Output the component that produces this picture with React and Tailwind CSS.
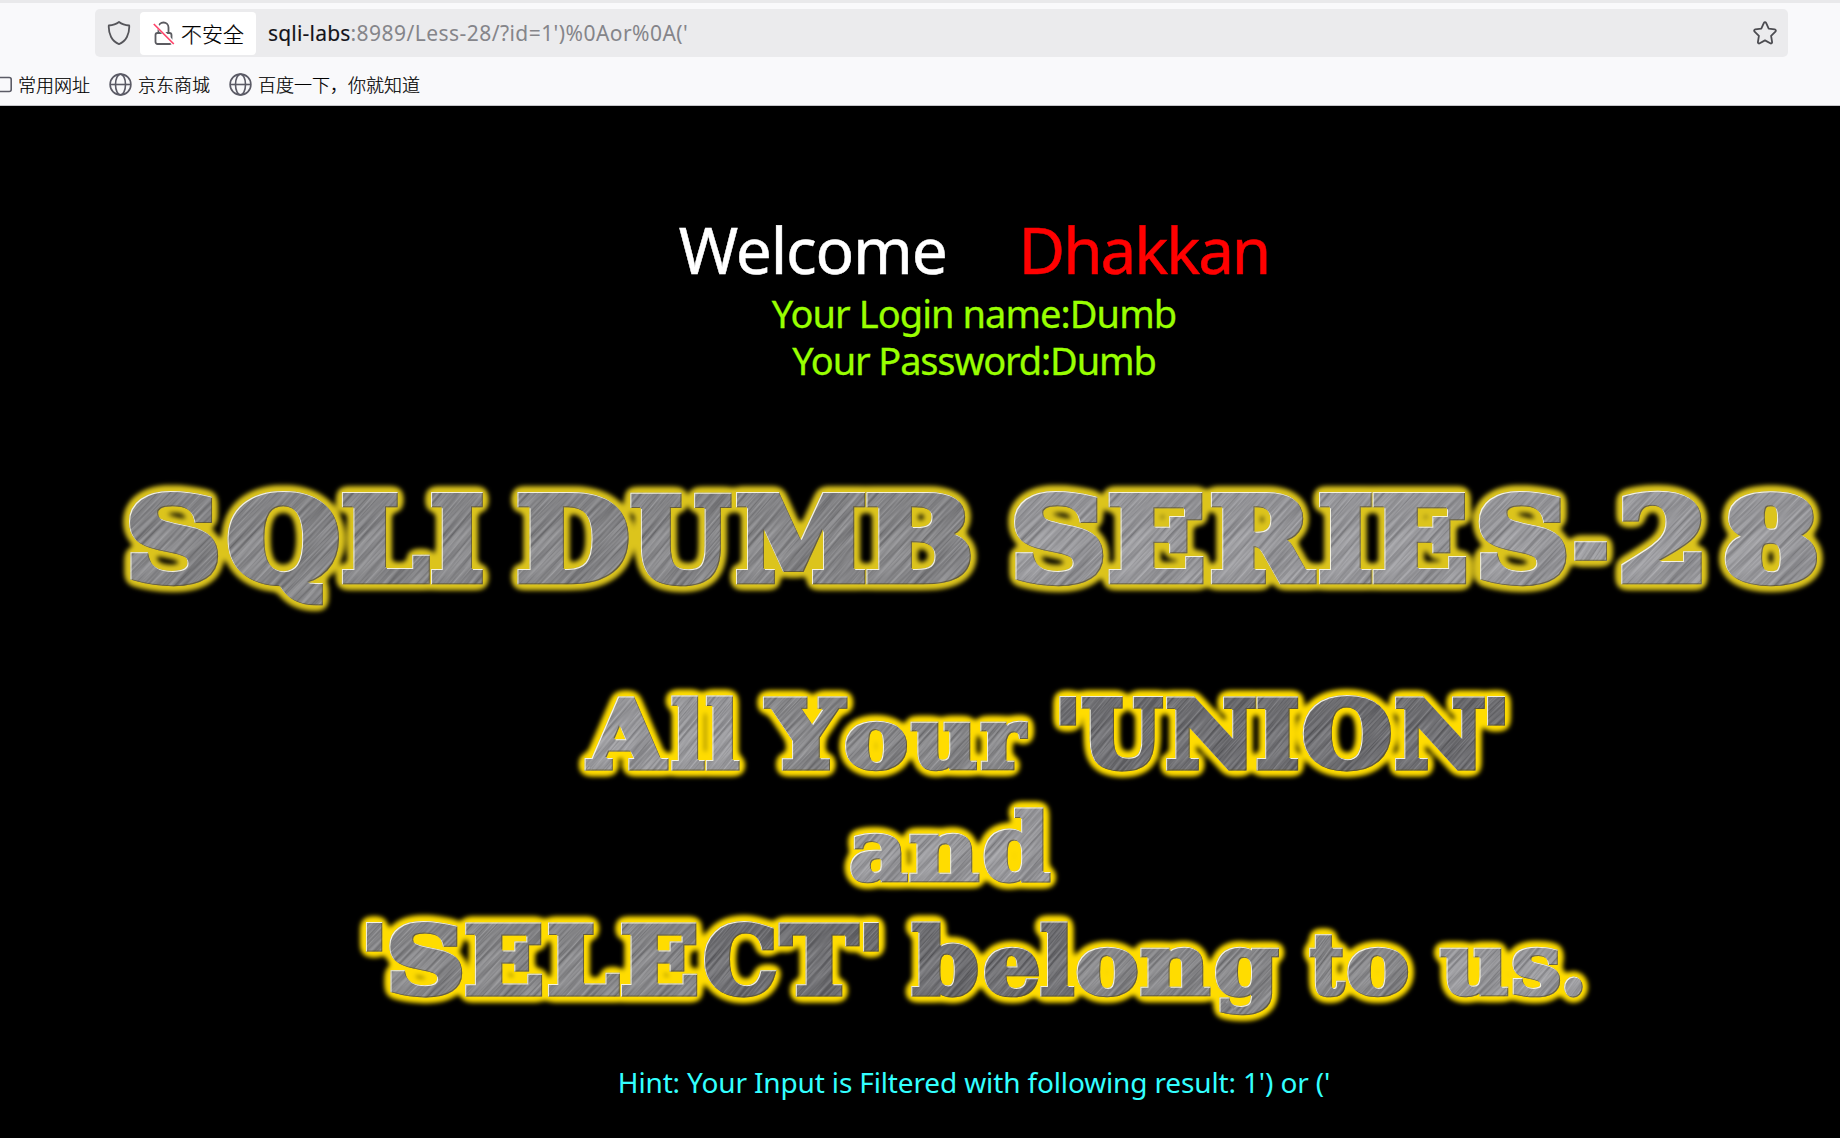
import React from 'react';

const SERIF = '"DejaVu Serif", serif';
const SIZE = 100;

const measure = (() => {
  const ctx = document.createElement('canvas').getContext('2d');
  const cache = {};
  return (ch) => {
    if (!cache[ch]) {
      ctx.font = `bold 1000px ${SERIF}`;
      const r = ctx.measureText(ch);
      cache[ch] = { left: -r.actualBoundingBoxLeft / 10, right: r.actualBoundingBoxRight / 10 };
    }
    return cache[ch];
  };
})();

/* Each word: baseline, cap height, metal tone, and [letter, left edge, right edge] */
const titleWords = [
  { y: 184.7, cap: 91.5, tone: 'mid', letters: [['S', 128.5, 219.4], ['Q', 226.3, 339], ['L', 341.9, 430.5], ['I', 431, 482.7]] },
  { y: 184.7, cap: 91.5, tone: 'mid', letters: [['D', 517.5, 629], ['U', 630, 732.5], ['M', 734.7, 865.4], ['B', 866.4, 971.6]] },
  { y: 184.7, cap: 91.5, tone: 'light', letters: [['S', 1013.7, 1104.8], ['E', 1108.6, 1204.3], ['R', 1210.8, 1317.3], ['I', 1319.2, 1371.7], ['E', 1372.8, 1467.2], ['S', 1478.3, 1567.8], ['-', 1573.7, 1608.5], ['2', 1620.7, 1702], ['8', 1724, 1819]] },
];
const unionWords = [
  { y: 100, cap: 74, tone: 'light', letters: [['A', 584, 669.5], ['l', 671, 705], ['l', 705.7, 740]] },
  { y: 100, cap: 74, tone: 'mid', letters: [['Y', 762.3, 848.7], ['o', 844, 908.3], ['u', 910, 978], ['r', 979.3, 1029]] },
  { y: 100, cap: 74, tone: 'dark', letters: [["'", 1059.3, 1077], ['U', 1081, 1164], ['N', 1165, 1256], ['I', 1256.5, 1298], ['O', 1301.7, 1391], ['N', 1394, 1485], ["'", 1487, 1506]] },
  { y: 212.7, cap: 74, tone: 'light', letters: [['a', 849.3, 908], ['n', 909, 980.7], ['d', 982.7, 1051.7]] },
  { y: 326, cap: 74, tone: 'mid', letters: [["'", 365.7, 383], ['S', 389, 463.3], ['E', 465.3, 543], ['L', 548, 620.5], ['E', 621, 698]] },
  { y: 326, cap: 74, tone: 'dark', letters: [['C', 703, 776], ['T', 777.5, 859.6], ["'", 863, 879.6]] },
  { y: 326, cap: 74, tone: 'dark', letters: [['b', 910.6, 979], ['e', 983, 1039], ['l', 1040, 1074.5]] },
  { y: 326, cap: 74, tone: 'mid', letters: [['o', 1075.7, 1139], ['n', 1140, 1211.7], ['g', 1214, 1280]] },
  { y: 326, cap: 74, tone: 'mid', letters: [['t', 1308.5, 1346.4], ['o', 1346.4, 1409.5]] },
  { y: 326, cap: 74, tone: 'light', letters: [['u', 1439, 1509.3], ['s', 1511.4, 1561], ['.', 1564, 1584]] },
];

const tones = { light: '#99999c', mid: '#848486', dark: '#656569' };

/* Height of the letter against the cap height of the font, and stroke that thickens it */
function shape(ch, cap) {
  const bold = /[A-Z0-9]/.test(ch) ? 7.5 : ch === "'" || ch === '-' || ch === '.' ? 3 : 5.5;
  if ('ouranegs'.includes(ch)) return { bold, sy: (cap * 0.68) / (54 + bold) };
  if ('dbl'.includes(ch)) return { bold, sy: cap / (76 + bold) };
  if (ch === 't') return { bold, sy: (cap * 0.83) / (68 + bold) };
  return { bold, sy: cap / (73 + bold) };
}

function Banner({ id, words, glow, className, viewBox }) {
  return (
    <svg className={className} viewBox={viewBox} role="img">
      <defs>
        <filter id={`${id}-noise`} x="0" y="0" width="100%" height="100%" colorInterpolationFilters="sRGB">
          <feTurbulence type="fractalNoise" baseFrequency="0.014 0.42" numOctaves="3" seed="7" />
          <feColorMatrix values="1.6 0 0 0 -0.28  1.6 0 0 0 -0.28  1.6 0 0 0 -0.27  0 0 0 0 1" />
        </filter>
        {Object.keys(tones).map((t) => (
          <pattern key={t} id={`${id}-${t}`} patternUnits="userSpaceOnUse" width="600" height="600" patternTransform="rotate(-50)">
            <rect width="600" height="600" fill={tones[t]} />
            <rect width="600" height="600" filter={`url(#${id}-noise)`} opacity="0.24" />
          </pattern>
        ))}
        <filter id={`${id}-bevel`} x="-10%" y="-10%" width="120%" height="120%" colorInterpolationFilters="sRGB">
          <feOffset in="SourceAlpha" dx="1.1" dy="1.4" result="a" />
          <feFlood floodColor="#fffde8" floodOpacity="0.9" />
          <feComposite in2="SourceAlpha" operator="in" />
          <feComposite in2="a" operator="out" result="hi" />
          <feOffset in="SourceAlpha" dx="-1.1" dy="-1.1" result="b" />
          <feFlood floodColor="#5a4f20" floodOpacity="0.7" />
          <feComposite in2="SourceAlpha" operator="in" />
          <feComposite in2="b" operator="out" result="lo" />
          <feMerge>
            <feMergeNode in="SourceGraphic" />
            <feMergeNode in="lo" />
            <feMergeNode in="hi" />
          </feMerge>
        </filter>
        <filter id={`${id}-glow`} filterUnits="userSpaceOnUse" x="0" y="0" width="1840" height="420" colorInterpolationFilters="sRGB">
          <feGaussianBlur in="SourceAlpha" stdDeviation="4" />
          <feComponentTransfer result="wide">
            <feFuncA type="linear" slope="12" intercept="-0.5" />
          </feComponentTransfer>
          <feGaussianBlur in="wide" stdDeviation="2.1" result="soft" />
          <feFlood floodColor={glow} />
          <feComposite in2="soft" operator="in" result="halo" />
          <feMerge>
            <feMergeNode in="halo" />
            <feMergeNode in="SourceGraphic" />
          </feMerge>
        </filter>
      </defs>
      <g filter={`url(#${id}-glow)`} fontFamily={SERIF} fontWeight="bold" fontSize={SIZE}>
        {words.map((w, i) => (
          <g key={i}>
            {w.letters.map(([ch, x0, x1], j) => {
              const g = measure(ch);
              const { bold, sy } = shape(ch, w.cap);
              const sx = (x1 - x0) / (g.right - g.left + bold);
              const tx = x0 - (g.left - bold / 2) * sx;
              const ty = w.y - (bold / 2) * sy;
              const paint = `url(#${id}-${w.tone})`;
              return (
                <g key={j} filter={`url(#${id}-bevel)`}>
                  <text transform={`translate(${tx} ${ty}) scale(${sx} ${sy})`} fill={paint} stroke={paint} strokeWidth={bold} strokeLinejoin="miter" strokeMiterlimit="2">
                    {ch}
                  </text>
                </g>
              );
            })}
          </g>
        ))}
      </g>
    </svg>
  );
}

const Globe = () => (
  <svg className="size-[23px] shrink-0" viewBox="0 0 23 23" fill="none" stroke="#5b5b66" strokeWidth="1.6">
    <circle cx="11.5" cy="11.5" r="10.4" />
    <ellipse cx="11.5" cy="11.5" rx="5" ry="10.4" />
    <path d="M1 11.5h21" />
  </svg>
);

function Chrome() {
  return (
    <header className="h-[106px] border-b border-[#c6c6ca] bg-[#f9f9fb] font-['Noto_Sans','Noto_Sans_CJK_SC',sans-serif]">
      <div className="h-[3px] bg-[#e9e9eb]" />
      <div className="mt-[6px] mr-[52px] ml-[95px] flex h-12 items-center rounded-[5px] bg-[#ebebed]">
        <svg className="ml-[12px] h-6 w-[24px]" viewBox="0 0 24 24" fill="none" stroke="#55555a" strokeWidth="1.8" strokeLinejoin="round">
          <path d="M12 1C9.500 3 5.500 4.300 1.800 4.500 1.300 13 5 20.500 12 23.100 19 20.500 22.700 13 22.200 4.500 18.500 4.300 14.500 3 12 1Z" />
        </svg>
        <div className="ml-[9px] flex h-[43px] w-[116px] items-center rounded-[4px] bg-white">
          <svg className="ml-[13px] h-6 w-[22px]" viewBox="0 0 22 24" fill="none" strokeWidth="1.800">
            <rect x="2.500" y="12" width="16" height="11" rx="2" stroke="#5b5b60" />
            <path d="M5.500 12V6.500a5 5 0 0 1 10 0V12" stroke="#5b5b60" />
            <path d="m1.500 2 19.500 21" stroke="#fff" strokeWidth="4" />
            <path d="m.8 3 20 20" stroke="#ff4369" strokeWidth="1.700" />
          </svg>
          <span className="ml-[6px] font-['Noto_Sans_CJK_SC',sans-serif] text-[21px] leading-[43px] font-light text-black [-webkit-text-stroke:0.2px]">不安全</span>
        </div>
        <div className="ml-[12px] flex-1 text-[21px] leading-[46px] whitespace-nowrap text-[#85858a]">
          <span className="tracking-[0.2px] text-[#15141a] [-webkit-text-stroke:0.15px]">sqli-labs</span>
          <span className="tracking-[0.45px]">:8989/Less-28/?id=1')%0Aor%0A('</span>
        </div>
        <svg className="mr-[11px] size-6" viewBox="0 0 24 24" fill="none" stroke="#4c4c51" strokeWidth="1.800" strokeLinejoin="round">
          <path d="M10.900 1.900c.5-.9 1.700-.9 2.200 0l2.600 5.700 6 .8c1.100.2 1.500 1.400.7 2.200l-4.300 4.200 1 6.300c.1 1-.9 1.700-1.800 1.200L12 19.400l-5.300 2.900c-.9.5-1.900-.2-1.800-1.200l1-6.300-4.300-4.200c-.8-.8-.4-2 .7-2.200l6-.8Z" />
        </svg>
      </div>
      <nav className="flex h-[48px] items-center pt-[7px] font-['Noto_Sans_CJK_SC',sans-serif] text-[18px] leading-6 font-light text-black [-webkit-text-stroke:0.2px]">
        <svg className="h-[17px] w-3" viewBox="0 0 12 17" fill="none" stroke="#5b5b66" strokeWidth="1.600">
          <path d="M-4 1.500h13.200a2 2 0 0 1 2 2v10a2 2 0 0 1-2 2H-4" />
        </svg>
        <span className="-mt-[2px] ml-[6px]">常用网址</span>
        <span className="ml-[19px] flex items-center gap-[6px]"><Globe /><span className="-mt-[2px]">京东商城</span></span>
        <span className="ml-[19px] flex items-center gap-[6px]"><Globe /><span className="-mt-[2px]">百度一下，你就知道</span></span>
      </nav>
    </header>
  );
}

export default function App() {
  return (
    <div className="flex h-[1138px] w-[1840px] flex-col overflow-hidden bg-black">
      <Chrome />
      <main className="flex flex-1 flex-col font-['Noto_Sans',sans-serif]">
        <div className="flex flex-col pt-[103px] pl-[108px] text-center">
          <h1 className="flex h-[81px] items-center justify-center gap-[72px] text-[64px] leading-[81px] text-white [-webkit-text-stroke:0.5px]">
            <span className="tracking-[-1.2px]">Welcome</span>
            <span className="tracking-[-2.2px] text-[#ff0000]">Dhakkan</span>
          </h1>
          <p className="text-[38px] leading-[47px] tracking-[-0.94px] text-[#99ff00] [-webkit-text-stroke:0.3px]">Your Login name:Dumb</p>
          <p className="text-[38px] leading-[47px] tracking-[-1.14px] text-[#99ff00] [-webkit-text-stroke:0.3px]">Your Password:Dumb</p>
        </div>
        <Banner id="title" words={titleWords} glow="#dcc41c" viewBox="0 0 1840 270" className="mt-[16px] block h-[270px] w-full shrink-0" />
        <Banner id="union" words={unionWords} glow="#ffdc00" viewBox="0 0 1840 380" className="block h-[380px] w-full shrink-0" />
        <p className="mt-[11px] pl-[108px] text-center text-[28px] leading-[42px] tracking-[-0.14px] text-[#33ffff]">
          Hint: Your Input is Filtered with following result: 1') or ('
        </p>
      </main>
    </div>
  );
}
